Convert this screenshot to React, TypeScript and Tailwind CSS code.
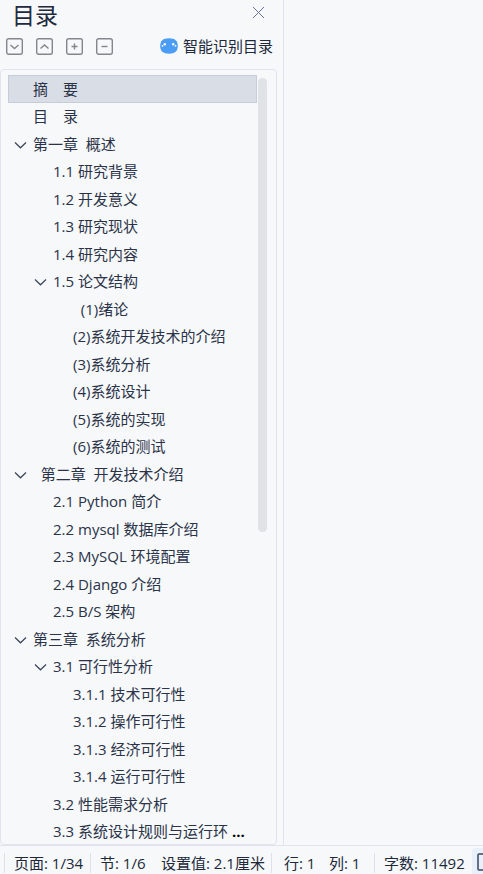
import React from "react";

type Entry = { level: 0 | 1 | 2; text: string; open?: boolean; cut?: boolean };

const entries: Entry[] = [
  { level: 0, text: "摘\u3000要" },
  { level: 0, text: "目\u3000录" },
  { level: 0, text: "第一章  概述", open: true },
  { level: 1, text: "1.1 研究背景" },
  { level: 1, text: "1.2 开发意义" },
  { level: 1, text: "1.3 研究现状" },
  { level: 1, text: "1.4 研究内容" },
  { level: 1, text: "1.5 论文结构", open: true },
  { level: 2, text: "  (1)绪论" },
  { level: 2, text: "(2)系统开发技术的介绍" },
  { level: 2, text: "(3)系统分析" },
  { level: 2, text: "(4)系统设计" },
  { level: 2, text: "(5)系统的实现" },
  { level: 2, text: "(6)系统的测试" },
  { level: 0, text: "  第二章  开发技术介绍", open: true },
  { level: 1, text: "2.1 Python 简介" },
  { level: 1, text: "2.2 mysql 数据库介绍" },
  { level: 1, text: "2.3 MySQL 环境配置" },
  { level: 1, text: "2.4 Django 介绍" },
  { level: 1, text: "2.5 B/S 架构" },
  { level: 0, text: "第三章  系统分析", open: true },
  { level: 1, text: "3.1 可行性分析", open: true },
  { level: 2, text: "3.1.1 技术可行性" },
  { level: 2, text: "3.1.2 操作可行性" },
  { level: 2, text: "3.1.3 经济可行性" },
  { level: 2, text: "3.1.4 运行可行性" },
  { level: 1, text: "3.2 性能需求分析" },
  { level: 1, text: "3.3 系统设计规则与运行环", cut: true },
];

const indents = ["pl-1", "pl-6", "pl-11"];

const tools = [
  { label: "展开", d: "M4.500 7l4 3.500l4-3.500" },
  { label: "收起", d: "M4.500 10.500l4-3.500l4 3.500" },
  { label: "增加级别", d: "M8.500 5.500v6M5.500 8.500h6" },
  { label: "减少级别", d: "M5.500 8.500h6" },
];

function Row({ entry, selected }: { entry: Entry; selected: boolean }) {
  return (
    <li
      className={`flex min-h-0 items-center border ${
        selected ? "border-[#c5cdd9] bg-[#d9dee6]" : "border-transparent"
      } ${indents[entry.level]}`}
    >
      <span className="flex w-5 shrink-0 items-center">
        {entry.open && (
          <button type="button" aria-label="折叠" aria-expanded="true">
            <svg width="14" height="14" viewBox="0 0 14 14" fill="none" stroke="#3c4558" strokeWidth="1.200" className="block">
              <path d="M2 5.500L7.500 10.800L13 5.500" />
            </svg>
          </button>
        )}
      </span>
      <button type="button" className="whitespace-pre leading-5">
        {entry.text}
        {entry.cut && <b className="text-black"> ...</b>}
      </button>
    </li>
  );
}

export default function App() {
  return (
    <div className="flex h-screen flex-col overflow-hidden bg-[#f6f8fa] font-['Open_Sans','Noto_Sans_CJK_SC',sans-serif] text-[15px] text-[#2b3348]">
      <div className="flex min-h-0 flex-1">
        <aside className="flex w-[284px] shrink-0 flex-col border-r border-[#e1e4ec]">
          <header className="flex h-7 items-start justify-between pr-[18px] pl-3">
            <h1 className="text-[23px] leading-[30px] text-[#232a3d]">目录</h1>
            <button type="button" aria-label="关闭" className="mt-[6px]">
              <svg width="13" height="13" viewBox="0 0 13 13" stroke="#686f98" className="block">
                <path d="M1 1l11 11M12 1L1 12" />
              </svg>
            </button>
          </header>
          <div className="flex h-9 items-center pl-[6px]">
            <div className="flex gap-[13px]">
              {tools.map((tool) => (
                <button key={tool.label} type="button" aria-label={tool.label}>
                  <svg width="17" height="17" viewBox="0 0 17 17" fill="none" stroke="#83868b" strokeWidth="1.400" className="block">
                    <rect x="0.700" y="0.700" width="15.600" height="15.600" rx="2" />
                    <path d={tool.d} />
                  </svg>
                </button>
              ))}
            </div>
            <button type="button" className="ml-[47px] flex items-center gap-[5px] text-[#20283a]">
              <svg width="18" height="16" viewBox="0 0 18 16" className="block">
                <path d="M9 .3C15 .3 17.800 3 17.800 8S15 15.700 9 15.700S.2 13 .2 8S3 .3 9 .3Z" fill="#4b9cf5" />
                <g fill="#fff">
                  <circle cx="4.800" cy="6.300" r="1.200" />
                  <circle cx="13.200" cy="6.300" r="1.200" />
                  <circle cx="2.500" cy="7.800" r="0.900" />
                  <circle cx="15.500" cy="7.800" r="0.900" />
                </g>
              </svg>
              <span>智能识别目录</span>
            </button>
          </div>
          <nav aria-label="目录" className="mt-[5px] mr-[6px] flex min-h-0 flex-1 rounded-sm border border-[#e1e4ec] pt-[5px] pl-[7px]">
            <ul className="-mb-px grid w-[249px] auto-rows-fr">
              {entries.map((entry, i) => (
                <Row key={entry.text} entry={entry} selected={i === 0} />
              ))}
            </ul>
            <div className="mt-[3px] ml-px h-[59%] w-[9px] rounded-full bg-[#dfe3e6]" />
          </nav>
        </aside>
        <main className="flex-1" />
      </div>
      <footer className="flex h-[29px] shrink-0 overflow-hidden border-t border-[#e1e4ec] pl-1 whitespace-nowrap text-[#20283a]">
        <div className="mt-[7px] flex h-5 w-[86px] shrink-0 items-center border-l border-[#dde1e9] pl-[9px]">页面: 1/34</div>
        <div className="mt-[7px] flex h-5 w-[181px] shrink-0 items-center border-l border-[#dde1e9] pl-[9px]">
          <span className="w-[61px]">节: 1/6</span>
          <span>设置值: 2.1厘米</span>
        </div>
        <div className="mt-[7px] flex h-5 w-[103px] shrink-0 items-center border-l border-[#dde1e9] pl-3">
          <span className="w-[45px]">行: 1</span>
          <span>列: 1</span>
        </div>
        <div className="mt-[7px] flex h-5 w-[98px] shrink-0 items-center border-l border-[#dde1e9] pl-[9px]">字数: 11492</div>
        <button type="button" aria-label="页面视图" className="mt-[2px] h-7 w-7 shrink-0 rounded-sm bg-[#e8f0fb] pl-[5px]">
          <svg width="18" height="18" viewBox="0 0 18 18" fill="none" stroke="#3a4560" strokeWidth="1.500" className="block">
            <rect x="1" y="1" width="16" height="16" rx="1" />
          </svg>
        </button>
      </footer>
    </div>
  );
}
